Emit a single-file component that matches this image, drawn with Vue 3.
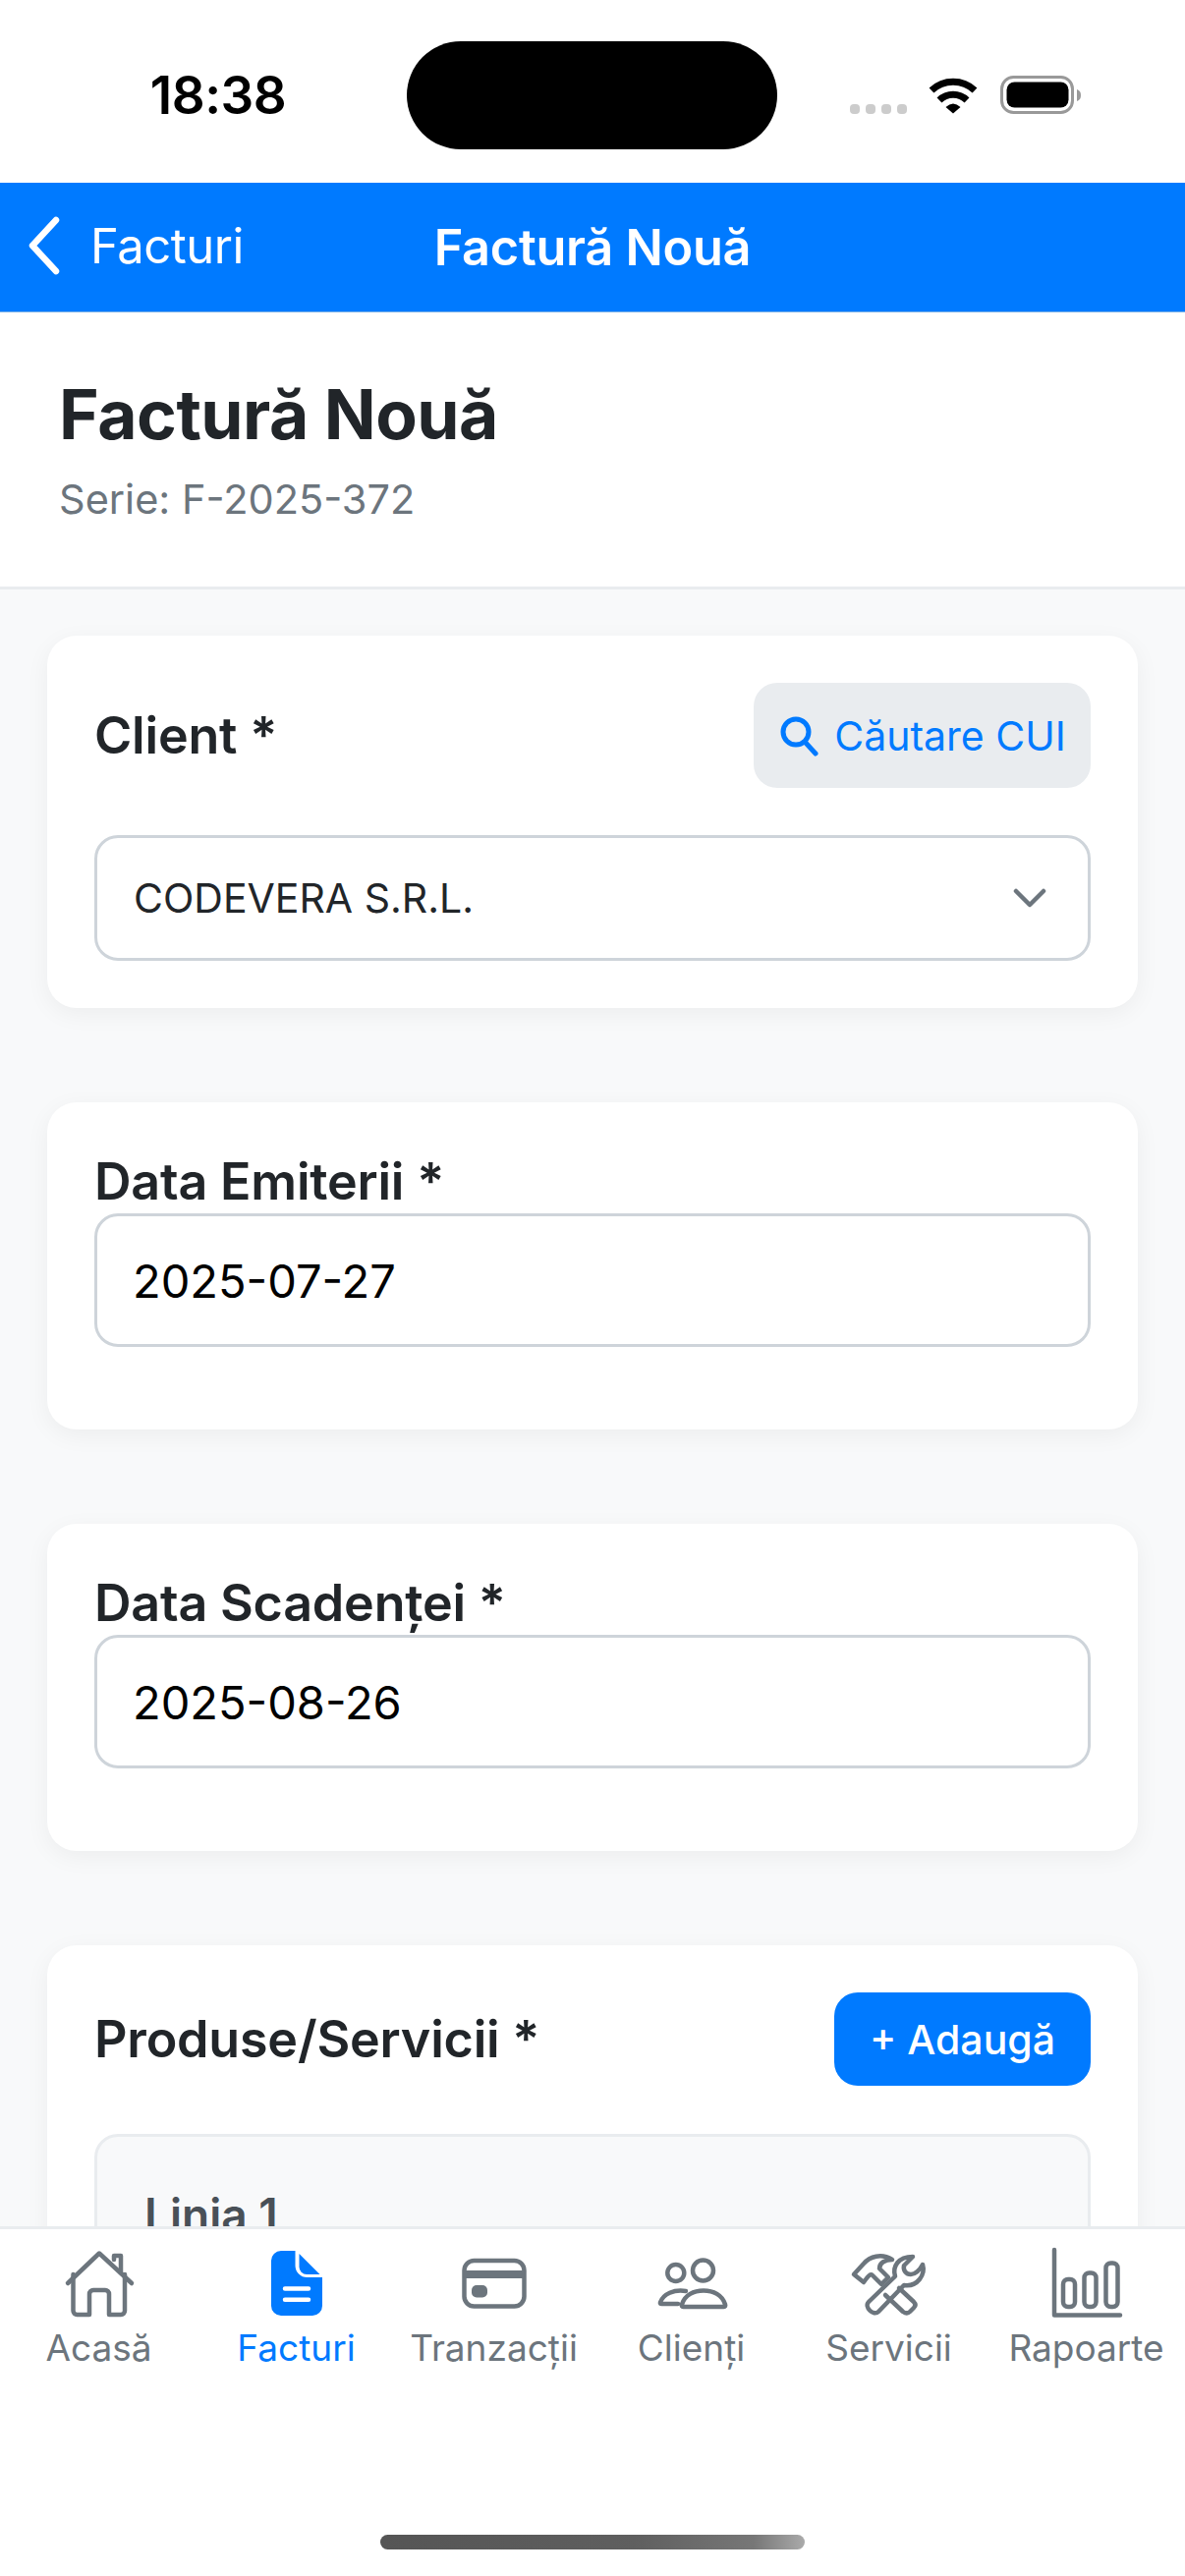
<script setup>
const tabs = [
  { key: 'home', label: 'Acasă' },
  { key: 'doc', label: 'Facturi', active: true },
  { key: 'card', label: 'Tranzacții' },
  { key: 'people', label: 'Clienți' },
  { key: 'tools', label: 'Servicii' },
  { key: 'chart', label: 'Rapoarte' },
]
const dates = [
  { label: 'Data Emiterii *', value: '2025-07-27' },
  { label: 'Data Scadenței *', value: '2025-08-26' },
]
</script>

<template>
  <div class="page">
    <div class="status">
      <div class="time">18:38</div>
      <div class="island"></div>
      <div class="sys">
        <div class="dots"><i></i><i></i><i></i><i></i></div>
        <svg class="wifi" width="50" height="38" viewBox="0 0 50 38">
          <path d="M3 14A32 32 0 0 1 47 14" fill="none" stroke="#000" stroke-width="7" />
          <path d="M11 24A20 20 0 0 1 39 24" fill="none" stroke="#000" stroke-width="7" />
          <path d="M17.5 31Q25 24 32.5 31L25 37.5Z" fill="#000" />
        </svg>
        <svg class="battery" width="84" height="40" viewBox="0 0 84 40">
          <rect x="1.5" y="1.5" width="72" height="36" rx="12" fill="none" stroke="#999" stroke-width="3" />
          <rect x="6.5" y="6.5" width="63" height="26" rx="8" fill="#000" />
          <path d="M78 14c3 1 4 3 4 6s-1 5-4 6Z" fill="#999" />
        </svg>
      </div>
    </div>

    <div class="nav">
      <div class="back">
        <svg width="36" height="60" viewBox="0 0 36 60">
          <path d="M31 4 7 30 31 56" fill="none" stroke="#fff" stroke-width="6.5" stroke-linecap="round" stroke-linejoin="round" />
        </svg>
        <span>Facturi</span>
      </div>
      <div class="nav-title">Factură Nouă</div>
    </div>

    <div class="head">
      <h1>Factură Nouă</h1>
      <p>Serie: F-2025-372</p>
    </div>

    <main class="main">
      <section class="card">
        <div class="row">
          <h2>Client *</h2>
          <div class="btn-cui">
            <svg width="42" height="42" viewBox="0 0 42 42">
              <circle cx="18" cy="17" r="13" fill="none" stroke="#007aff" stroke-width="5" />
              <path d="M27 27 38 39" fill="none" stroke="#007aff" stroke-width="5" stroke-linecap="round" />
            </svg>
            <span>Căutare CUI</span>
          </div>
        </div>
        <div class="select">
          <span>CODEVERA S.R.L.</span>
          <svg width="34" height="20" viewBox="0 0 34 20">
            <path d="M3 3 17 17 31 3" fill="none" stroke="#6c757d" stroke-width="4.5" stroke-linecap="round" stroke-linejoin="round" />
          </svg>
        </div>
      </section>

      <section v-for="d in dates" :key="d.label" class="card date">
        <h2 class="date-label">{{ d.label }}</h2>
        <div class="input">{{ d.value }}</div>
      </section>

      <section class="card">
        <div class="row">
          <h2>Produse/Servicii *</h2>
          <div class="btn-add">+ Adaugă</div>
        </div>
        <div class="line">
          <h3>Linia 1</h3>
        </div>
      </section>
    </main>

    <nav class="tabs">
      <div v-for="t in tabs" :key="t.key" class="tab" :class="{ on: t.active }">
        <svg width="120" height="84" viewBox="0 0 120 84" class="tab-icon">
          <g v-if="t.key === 'home'" fill="none" stroke="currentColor" stroke-width="4.5" stroke-linecap="round" stroke-linejoin="round">
            <path d="M28 39 60 8.5 93 39" />
            <path d="M33.5 30V67a4 4 0 0 0 4 4H50V50a4 4 0 0 1 4-4h12a4 4 0 0 1 4 4V71h12a4 4 0 0 0 4-4V30" />
            <path d="M75 15V11h7V28" />
          </g>
          <g v-else-if="t.key === 'doc'">
            <path d="M34 16A10 10 0 0 1 44 6H58.500V21A12 12 0 0 0 70.500 33H86V62A10 10 0 0 1 76 72H44A10 10 0 0 1 34 62Z" fill="currentColor" />
            <path d="M62.500 9 83.500 30H70A7.500 7.500 0 0 1 62.500 22.500Z" fill="currentColor" />
            <path d="M48 44.500H72M48 55.700H72" fill="none" stroke="#fff" stroke-width="4.500" stroke-linecap="round" />
          </g>
          <g v-else-if="t.key === 'card'">
            <rect x="29.500" y="16" width="61" height="46.500" rx="10" fill="none" stroke="currentColor" stroke-width="4.500" />
            <rect x="29.500" y="26" width="61" height="8" fill="currentColor" />
            <rect x="37" y="41" width="16" height="12.500" rx="5" fill="currentColor" />
          </g>
          <g v-else-if="t.key === 'people'" fill="none" stroke="currentColor" stroke-width="4.500" stroke-linecap="round" stroke-linejoin="round">
            <circle cx="43.800" cy="28.500" r="8.500" />
            <circle cx="71.500" cy="26" r="10.500" />
            <path d="M51.500 63C50 63 49.500 62 50 60.500C53 51 62 46.500 72 46.500C82 46.500 91 51 94 60.500C94.500 62 94 63 92.500 63Z" />
            <path d="M54 47C42 45 31 50 28 58.500C27.700 59.500 28 60 29.500 60H46" />
          </g>
          <g v-else-if="t.key === 'tools'" fill="none" stroke="currentColor" stroke-width="4.500" stroke-linecap="round" stroke-linejoin="round">
            <path d="M39 58 66 32C63 22 69 12 84 12L75 21C74 26 77 30 82 30C86 30 91 26 94 20C97 30 89 43 75 41L49 68C44 73 34 63 39 58Z" />
            <path d="M24 30 34 19C40 12 52 8 63 15C56 15 50 18 50 24L59 33 52 40 43 31C41 29 39 31 34 38Z" />
            <path d="M56 51 74 68C77 70 79 70 81 68L85 64C87 62 87 60 85 58L70 44" />
          </g>
          <g v-else fill="none" stroke="currentColor" stroke-width="4.500" stroke-linecap="round" stroke-linejoin="round">
            <path d="M27 5V71.500H94" />
            <rect x="36" y="35" width="12" height="28" rx="5" />
            <rect x="57.500" y="28.500" width="12" height="34.500" rx="5" />
            <rect x="79.500" y="18.500" width="12" height="44.500" rx="5" />
          </g>
        </svg>
        <span>{{ t.label }}</span>
      </div>
    </nav>
    <div class="home-bar-wrap"><div class="home-bar"></div></div>
  </div>
</template>

<style>
html, body { margin: 0; background: #fff; }
</style>

<style scoped>
.page {
  width: 1206px;
  height: 2622px;
  display: flex;
  flex-direction: column;
  overflow: hidden;
  background: #f8f9fa;
  font-family: Inter, "Liberation Sans", sans-serif;
  color: #212529;
}
.status {
  flex: none;
  height: 186px;
  background: #fff;
  display: grid;
  grid-template-columns: 414px 377px 1fr;
}
.time {
  font-size: 53px;
  font-weight: 600;
  color: #000;
  text-align: center;
  line-height: 194px;
  padding-left: 30px;
  letter-spacing: -0.5px;
}
.island {
  margin-top: 42px;
  height: 110px;
  border-radius: 55px;
  background: #000;
}
.sys {
  display: flex;
  align-items: flex-start;
  padding: 78px 0 0 74px;
}
.dots { display: flex; gap: 6px; margin-top: 28px; }
.dots i { width: 10px; height: 10px; border-radius: 4px; background: #ccc; }
.wifi { margin-left: 22px; }
.battery { margin-left: 23px; margin-top: -1px; }

.nav {
  flex: none;
  height: 132px;
  box-sizing: border-box;
  background: #007aff;
  border-bottom: 1px solid #7fb2e8;
  color: #fff;
  position: relative;
  display: flex;
  align-items: center;
  justify-content: center;
}
.back {
  position: absolute;
  left: 26px;
  top: 34px;
  display: flex;
  align-items: center;
  gap: 30px;
  font-size: 49px;
  font-weight: 400;
  letter-spacing: -0.5px;
}
.nav-title { font-size: 50.5px; font-weight: 600; letter-spacing: -0.3px; }

.head {
  flex: none;
  height: 282px;
  box-sizing: border-box;
  background: #fff;
  border-bottom: 3px solid #e9ecef;
  padding: 48px 60px 0;
}
h1 {
  margin: 0;
  font-size: 69.5px;
  line-height: 112px;
  font-weight: 700;
  letter-spacing: -0.5px;
  color: #212529;
}
.head p {
  margin: 5px 0 0;
  font-size: 41.5px;
  line-height: 50px;
  color: #6c757d;
}
.main {
  flex: 1;
  min-height: 0;
  overflow: hidden;
  padding: 47px 48px 0;
  display: flex;
  flex-direction: column;
  gap: 96px;
}
.card {
  flex: none;
  background: #fff;
  border-radius: 30px;
  padding: 48px;
  box-shadow: 0 6px 24px rgba(0, 0, 0, 0.05);
}
h2 {
  margin: 0;
  font-size: 52px;
  font-weight: 600;
  color: #212529;
  letter-spacing: -0.2px;
}
.row {
  display: flex;
  justify-content: space-between;
  align-items: center;
}
.btn-cui {
  width: 343px;
  height: 107px;
  box-sizing: border-box;
  border-radius: 24px;
  background: #e9ecef;
  color: #007aff;
  display: flex;
  align-items: center;
  justify-content: center;
  gap: 15px;
  font-size: 41px;
}
.select {
  margin-top: 48px;
  height: 128px;
  box-sizing: border-box;
  border: 3px solid #ced4da;
  border-radius: 24px;
  padding: 0 42px 0 37px;
  display: flex;
  align-items: center;
  justify-content: space-between;
  font-size: 41px;
  color: #212529;
}
.date { padding-bottom: 84px; }
.date-label { line-height: 65px; }
.input {
  height: 136px;
  box-sizing: border-box;
  border: 3px solid #ced4da;
  border-radius: 24px;
  padding-left: 36px;
  display: flex;
  align-items: center;
  font-size: 47px;
  color: #000;
}
.btn-add {
  width: 261px;
  height: 95px;
  border-radius: 24px;
  background: #007aff;
  color: #fff;
  display: flex;
  align-items: center;
  justify-content: center;
  font-size: 41px;
  font-weight: 500;
}
.line {
  margin-top: 49px;
  border: 3px solid #e9ecef;
  border-radius: 24px;
  background: #f8f9fa;
  padding: 51px 48px;
  height: 400px;
  box-sizing: border-box;
}
h3 {
  margin: 0;
  font-size: 46px;
  font-weight: 600;
  color: #495057;
}
.tabs {
  flex: none;
  height: 250px;
  box-sizing: border-box;
  background: #fff;
  border-top: 3px solid #e9ecef;
  display: grid;
  grid-template-columns: repeat(6, 1fr);
  position: relative;
  z-index: 1;
}
.tab {
  display: flex;
  flex-direction: column;
  align-items: center;
  padding-top: 16px;
  color: #6c757d;
  font-size: 37px;
  line-height: 44px;
}
.tab.on { color: #007aff; }
.tab-icon { display: block; margin-bottom: -1px; }
.home-bar-wrap {
  flex: none;
  height: 106px;
  background: #fff;
  display: flex;
  justify-content: center;
  position: relative;
  z-index: 1;
}
.home-bar {
  margin-top: 64px;
  width: 432px;
  height: 15px;
  border-radius: 8px;
  background: linear-gradient(90deg, #555, #5f5f5f 60%, #777 88%, #aaa);
}
</style>
